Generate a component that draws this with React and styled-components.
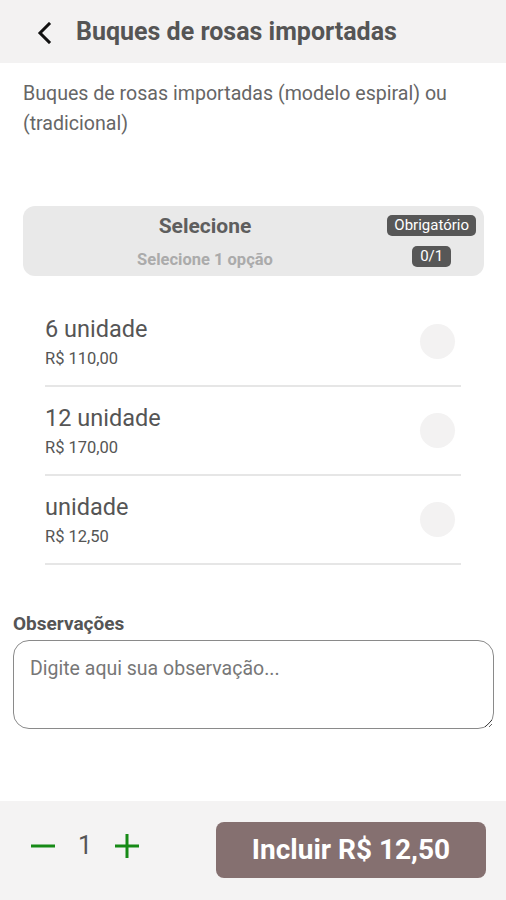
import styled, { createGlobalStyle } from "styled-components";

const GlobalStyle = createGlobalStyle`
  * { box-sizing: border-box; }
  body {
    margin: 0;
    font-family: Roboto, "Liberation Sans", sans-serif;
    background: #ffffff;
  }
`;

const options = [
  { name: "6 unidade", price: "R$ 110,00" },
  { name: "12 unidade", price: "R$ 170,00" },
  { name: "unidade", price: "R$ 12,50" },
];

export default function App() {
  return (
    <Page>
      <GlobalStyle />
      <Header>
        <BackButton aria-label="Voltar">
          <svg width="18" height="22" viewBox="0 0 18 22" fill="none">
            <path d="M13 2 L4 11 L13 20" stroke="#111" strokeWidth="3" strokeLinecap="square" />
          </svg>
        </BackButton>
        <Title>Buques de rosas importadas</Title>
      </Header>

      <Description>
        Buques de rosas importadas (modelo espiral) ou (tradicional)
      </Description>

      <GroupCard>
        <GroupTitles>
          <GroupTitle>Selecione</GroupTitle>
          <GroupHint>Selecione 1 opção</GroupHint>
        </GroupTitles>
        <Badges>
          <Badge>Obrigatório</Badge>
          <Badge $small>0/1</Badge>
        </Badges>
      </GroupCard>

      <OptionList>
        {options.map((o) => (
          <OptionRow key={o.name}>
            <OptionInfo>
              <OptionName>{o.name}</OptionName>
              <OptionPrice>{o.price}</OptionPrice>
            </OptionInfo>
            <Radio />
          </OptionRow>
        ))}
      </OptionList>

      <NotesSection>
        <NotesLabel>Observações</NotesLabel>
        <NotesInput placeholder="Digite aqui sua observação..." />
      </NotesSection>

      <Footer>
        <Stepper>
          <StepButton aria-label="Diminuir">
            <svg width="26" height="26" viewBox="0 0 26 26">
              <path d="M1 13 H25" stroke="#168a16" strokeWidth="3" />
            </svg>
          </StepButton>
          <Count>1</Count>
          <StepButton aria-label="Aumentar">
            <svg width="26" height="26" viewBox="0 0 26 26">
              <path d="M1 13 H25 M13 1 V25" stroke="#168a16" strokeWidth="3" />
            </svg>
          </StepButton>
        </Stepper>
        <AddButton>Incluir R$ 12,50</AddButton>
      </Footer>
    </Page>
  );
}

const Page = styled.div`
  min-height: 100vh;
  display: flex;
  flex-direction: column;
`;

const Header = styled.header`
  height: 63px;
  background: #f3f2f2;
  display: flex;
  align-items: center;
  padding-left: 36px;
  gap: 22px;
`;

const BackButton = styled.button`
  border: none;
  background: none;
  padding: 0;
  display: flex;
  align-items: center;
  margin-top: 2px;
`;

const Title = styled.h1`
  margin: 0;
  font-size: 25px;
  font-weight: 700;
  color: #555555;
`;

const Description = styled.p`
  margin: 16px 30px 0 23px;
  font-size: 19.6px;
  line-height: 30px;
  color: #666666;
`;

const GroupCard = styled.section`
  margin: 67px 22px 0 23px;
  height: 70px;
  border-radius: 12px;
  background: #e9e9e9;
  display: flex;
  align-items: center;
  padding: 0 8px 0 0;
`;

const GroupTitles = styled.div`
  width: 364px;
  display: flex;
  flex-direction: column;
  align-items: center;
  gap: 12px;
`;

const GroupTitle = styled.span`
  font-size: 21px;
  font-weight: 700;
  color: #5e5e5e;
`;

const GroupHint = styled.span`
  font-size: 16.5px;
  font-weight: 700;
  color: #ababab;
`;

const Badges = styled.div`
  margin-left: auto;
  display: flex;
  flex-direction: column;
  align-items: center;
  gap: 10px;
`;

const Badge = styled.span`
  background: #575757;
  color: #ffffff;
  font-size: 15px;
  line-height: 21px;
  padding: 0 ${(p) => (p.$small ? "8px" : "7px")};
  border-radius: 5px;
`;

const OptionList = styled.ul`
  list-style: none;
  margin: 22px 45px 0 45px;
  padding: 0;
`;

const OptionRow = styled.li`
  height: 89px;
  display: flex;
  align-items: center;
  justify-content: space-between;
  border-bottom: 2px solid #e6e6e6;
  padding-right: 6px;
`;

const OptionInfo = styled.div`
  display: flex;
  flex-direction: column;
  gap: 6px;
`;

const OptionName = styled.span`
  font-size: 23.5px;
  color: #555555;
`;

const OptionPrice = styled.span`
  font-size: 16.5px;
  color: #555555;
`;

const Radio = styled.span`
  width: 35px;
  height: 35px;
  border-radius: 50%;
  background: #f3f2f2;
`;

const NotesSection = styled.div`
  margin: 47px 12px 0 13px;
  display: flex;
  flex-direction: column;
  gap: 5px;
`;

const NotesLabel = styled.label`
  font-size: 19px;
  font-weight: 700;
  color: #555555;
`;

const NotesInput = styled.textarea`
  height: 89px;
  border: 1px solid #8a8a8a;
  border-radius: 16px;
  padding: 16px 16px;
  font-family: Roboto, "Liberation Sans", sans-serif;
  font-size: 19.5px;
  color: #555555;
  resize: vertical;
  outline: none;
  &::placeholder {
    color: #777777;
  }
`;

const Footer = styled.footer`
  margin-top: auto;
  height: 99px;
  background: #f4f3f3;
  display: flex;
  align-items: center;
  justify-content: space-between;
  padding: 0 20px 0 30px;
`;

const Stepper = styled.div`
  display: flex;
  align-items: center;
  gap: 22px;
  margin-top: -10px;
`;

const StepButton = styled.button`
  border: none;
  background: none;
  padding: 0;
  display: flex;
`;

const Count = styled.span`
  font-size: 25px;
  color: #555555;
  width: 14px;
  text-align: center;
`;

const AddButton = styled.button`
  width: 270px;
  height: 56px;
  border: none;
  border-radius: 8px;
  background: #857070;
  color: #ffffff;
  font-family: Roboto, "Liberation Sans", sans-serif;
  font-size: 28px;
  font-weight: 700;
  margin-bottom: 2px;
`;
